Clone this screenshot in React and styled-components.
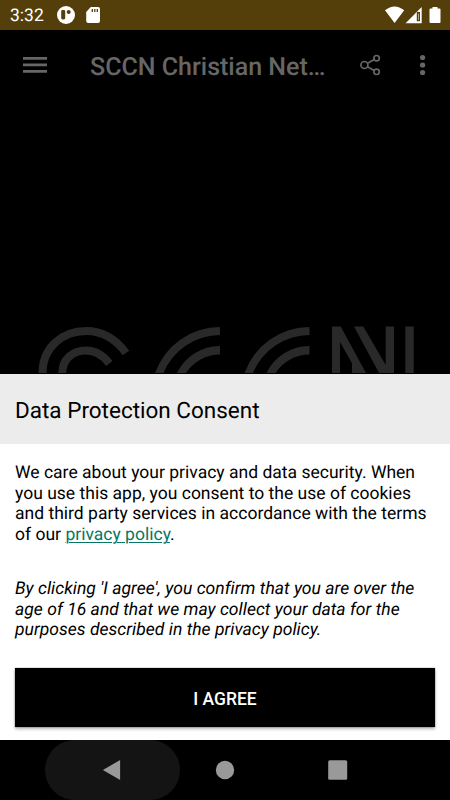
import React from 'react';
import styled, { createGlobalStyle } from 'styled-components';

const GlobalStyle = createGlobalStyle`
    * {
        box-sizing: border-box;
    }
    body {
        margin: 0;
        background: #000;
        font-family: Roboto, 'Liberation Sans', sans-serif;
        text-rendering: geometricPrecision;
    }
`;

const ScreenStl = styled.div`
    display: flex;
    flex-direction: column;
    width: 450px;
    height: 800px;
    overflow: hidden;
    background: #000;
`;

const StatusBarStl = styled.header`
    display: flex;
    align-items: center;
    height: 30px;
    flex: none;
    padding: 0 9px 0 10px;
    background: #543f0a;
    color: #fff;
`;

const ClockStl = styled.span`
    width: 47px;
    font-size: 17.5px;
    line-height: 30px;
    padding-top: 2px;
`;

const SpacerStl = styled.div`
    flex: 1;
`;

const SvgStl = styled.svg`
    display: block;
    flex: none;
`;

const ToolbarStl = styled.div`
    display: flex;
    align-items: center;
    height: 70px;
    flex: none;
    padding-left: 23px;
    color: #666;
`;

const AppTitleStl = styled.h1`
    margin: 5px 34px 0 43px;
    width: 236px;
    font-size: 25px;
    font-weight: 500;
    line-height: 30px;
    white-space: nowrap;
`;

const SplashStl = styled.main`
    display: flex;
    align-items: flex-end;
    flex: 1;
`;

const SheetStl = styled.section`
    flex: none;
    height: 366px;
    background: #fff;
    color: #000;
`;

const SheetTitleStl = styled.h2`
    margin: 0;
    height: 70px;
    padding: 2px 15px 0;
    background: #ececec;
    font-size: 22.5px;
    font-weight: 400;
    line-height: 70px;
`;

const SheetBodyStl = styled.div`
    padding: 19px 15px 0;
`;

const TextStl = styled.p`
    margin: 0 0 ${({ $gap }) => $gap}px;
    font-size: 17.5px;
    font-style: ${({ $italic }) => ($italic ? 'italic' : 'normal')};
    letter-spacing: ${({ $italic }) => ($italic ? '0.03px' : '0.01px')};
    line-height: 20.7px;
    white-space: nowrap;
`;

const LinkStl = styled.a`
    color: #087763;
    text-decoration: underline;
    text-decoration-thickness: 1px;
    text-underline-offset: 2px;
`;

const AgreeButtonStl = styled.button`
    display: block;
    width: 100%;
    height: 59px;
    padding: 3px 0 0;
    border: 0;
    background: #000;
    color: #fff;
    font-family: inherit;
    font-size: 17.5px;
    font-weight: 500;
    box-shadow: 0 0 1px rgba(0, 0, 0, 0.6), 0 2px 3px rgba(0, 0, 0, 0.3);
`;

const NavBarStl = styled.nav`
    display: flex;
    flex: none;
    height: 60px;
    padding-left: 45px;
    color: #999;
`;

const NavItemStl = styled.div`
    display: flex;
    align-items: center;
    justify-content: center;
    width: ${({ $width }) => $width}px;
    border-radius: 30px;
    background: ${({ $pressed }) => ($pressed ? '#141414' : 'none')};
`;

const StatusBar = () => (
    <StatusBarStl>
        <ClockStl>3:32</ClockStl>
        <SvgStl width="50" height="30" fill="#fff">
            <circle cx="9" cy="15" r="9" />
            <path d="M4.2 11.5q0-1.4 1.4-1.4h1.2q1.4 0 1.4 1.4V18q0 1.6-2 1.6t-2-1.6z" fill="#543f0a" />
            <circle cx="11.7" cy="12" r="2" fill="#543f0a" />
            <path d="M33.8 7H41a2 2 0 0 1 2 2v12a2 2 0 0 1-2 2H31.2a2 2 0 0 1-2-2v-9z" />
            <path d="M35.3 9v3M37.8 9v3M40.3 9v3" stroke="#543f0a" strokeWidth="1.3" />
        </SvgStl>
        <SpacerStl />
        <SvgStl width="56" height="30" viewBox="385 0 56 30" fill="#fff">
            <path d="M385 10.3q9.5-7.6 19.2 0L394.6 23z" />
            <path d="M421.7 7v16.3h-16.2z" />
            <path d="M416.8 11.9h3.2v9.3h-3.2z" fill="#543f0a" />
            <path d="M418.2 13.5h.7v6.5h-.7z" fill="#d8cfb8" />
            <path d="M432.5 7h5v1.5h2a1 1 0 0 1 1 1V22a1 1 0 0 1-1 1h-9a1 1 0 0 1-1-1V9.5a1 1 0 0 1 1-1h2z" />
        </SvgStl>
    </StatusBarStl>
);

const Toolbar = () => (
    <ToolbarStl>
        <SvgStl width="24" height="18" fill="currentColor">
            <path d="M0 1h24v2.7H0zM0 7.5h24v2.7H0zM0 14h24v2.7H0z" />
        </SvgStl>
        <AppTitleStl>SCCN Christian Net…</AppTitleStl>
        <SvgStl width="70" height="24" viewBox="360 53 70 24">
            <g fill="none" stroke="currentColor" strokeWidth="1.7">
                <circle cx="364.4" cy="65" r="3.5" />
                <circle cx="376.6" cy="58.2" r="2.7" />
                <circle cx="376.6" cy="71.8" r="2.7" />
                <path d="M367.5 63.3l6.7-3.8M367.5 66.7l6.7 3.8" />
            </g>
            <g fill="currentColor">
                <circle cx="422.6" cy="57.5" r="2.6" />
                <circle cx="422.6" cy="65" r="2.6" />
                <circle cx="422.6" cy="72.5" r="2.6" />
            </g>
        </SvgStl>
    </ToolbarStl>
);

const Logo = () => (
    <SvgStl width="450" height="54" viewBox="0 320 450 54">
        <g fill="none" stroke="#292929" strokeWidth="8">
            <path d="M42.5 373C42.5 347 63 331 86 331C102 331 115 338 126 353" />
            <path d="M62.3 373C62.3 359 73 350.5 86 350.5C96 350.5 103 355 109.3 363.5" />
        </g>
        {[0, 89.5].map((x) => (
            <path
                key={x}
                transform={`translate(${x} 0)`}
                fill="#292929"
                d="M220 327v8A61 61 0 0 0 163.5 373H155A69 69 0 0 1 220 327zM220 346v8.5A40.5 40.5 0 0 0 186 373H177A48 48 0 0 1 220 346z"
            />
        ))}
        <path
            fill="#292929"
            d="M332 326.5h8.7L366 373H352v-9.7L340 342v31h-8zM354 326.5h9.3L385.7 365v-38.5h8.3V373h-15zM405.3 326.5h8.4V373h-8.4z"
        />
    </SvgStl>
);

const ConsentSheet = () => (
    <SheetStl>
        <SheetTitleStl>Data Protection Consent</SheetTitleStl>
        <SheetBodyStl>
            <TextStl $gap={33}>
                We care about your privacy and data security. When
                <br />
                you use this app, you consent to the use of cookies
                <br />
                and third party services in accordance with the terms
                <br />
                of our <LinkStl>privacy policy</LinkStl>.
            </TextStl>
            <TextStl $gap={27} $italic>
                By clicking 'I agree', you confirm that you are over the
                <br />
                age of 16 and that we may collect your data for the
                <br />
                purposes described in the privacy policy.
            </TextStl>
            <AgreeButtonStl>I AGREE</AgreeButtonStl>
        </SheetBodyStl>
    </SheetStl>
);

const NavBar = () => (
    <NavBarStl>
        <NavItemStl $width={135} $pressed>
            <SvgStl width="22" height="24" fill="currentColor">
                <path
                    d="M0.2 12L17.5 2q1-.5 1 .5v19q0 1-1 .5z"
                    stroke="#000"
                    strokeWidth="0.6"
                    strokeLinejoin="round"
                />
            </SvgStl>
        </NavItemStl>
        <NavItemStl $width={90}>
            <SvgStl width="20" height="20" fill="currentColor">
                <circle cx="10" cy="10" r="9.2" />
            </SvgStl>
        </NavItemStl>
        <NavItemStl $width={135}>
            <SvgStl width="20" height="20" fill="currentColor">
                <rect x="0.2" y="0.3" width="19" height="19.4" rx="1.5" />
            </SvgStl>
        </NavItemStl>
    </NavBarStl>
);

const App = () => (
    <>
        <GlobalStyle />
        <ScreenStl>
            <StatusBar />
            <Toolbar />
            <SplashStl>
                <Logo />
            </SplashStl>
            <ConsentSheet />
            <NavBar />
        </ScreenStl>
    </>
);

export default App;
